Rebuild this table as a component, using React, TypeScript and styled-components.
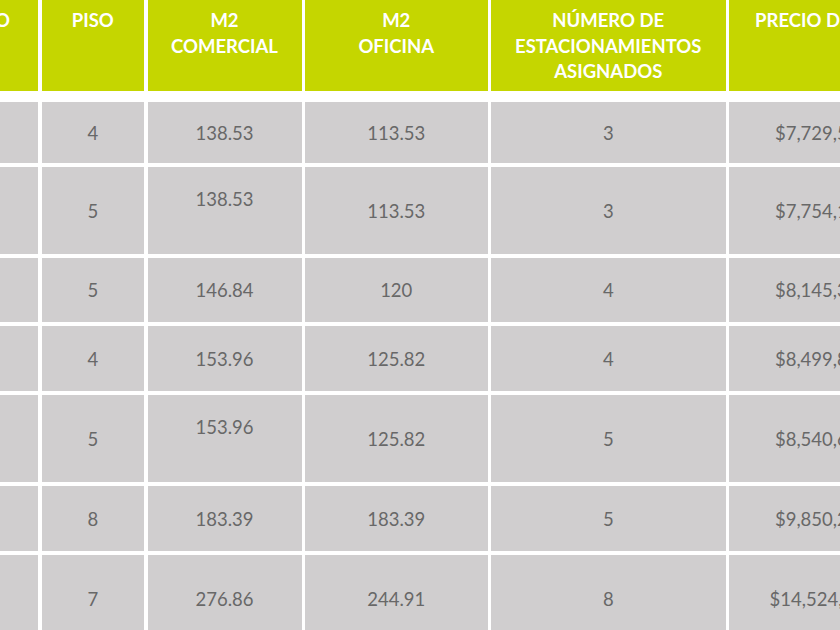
import styled, { createGlobalStyle } from "styled-components";

const GlobalStyle = createGlobalStyle`
  html, body {
    margin: 0;
    padding: 0;
    background: #ffffff;
    overflow: hidden;
  }
  body {
    font-family: "Lato", "Open Sans", sans-serif;
  }
`;

const COLS = "118px 102.5px 154px 182.5px 234.5px 212px";

const rows = [
  { piso: "4", comercial: "138.53", oficina: "113.53", est: "3", precio: "$7,729,560.00", h: 61 },
  { piso: "5", comercial: "138.53", oficina: "113.53", est: "3", precio: "$7,754,190.00", h: 87, top: true },
  { piso: "5", comercial: "146.84", oficina: "120", est: "4", precio: "$8,145,320.00", h: 64 },
  { piso: "4", comercial: "153.96", oficina: "125.82", est: "4", precio: "$8,499,870.00", h: 65 },
  { piso: "5", comercial: "153.96", oficina: "125.82", est: "5", precio: "$8,540,610.00", h: 87, top: true },
  { piso: "8", comercial: "183.39", oficina: "183.39", est: "5", precio: "$9,850,240.00", h: 65 },
  { piso: "7", comercial: "276.86", oficina: "244.91", est: "8", precio: "$14,524,380.00", h: 87 },
];

const PriceTable = () => {
  return (
    <Wrapper>
      <HeaderRow>
        <HeadCell>DEPTO</HeadCell>
        <HeadCell>PISO</HeadCell>
        <HeadCell>
          M2
          <br />
          COMERCIAL
        </HeadCell>
        <HeadCell>
          M2
          <br />
          OFICINA
        </HeadCell>
        <HeadCell>
          NÚMERO DE
          <br />
          ESTACIONAMIENTOS
          <br />
          ASIGNADOS
        </HeadCell>
        <HeadCell>PRECIO DE VENTA</HeadCell>
      </HeaderRow>
      <Body>
        {rows.map((r, i) => (
          <BodyRow key={i} $height={r.h}>
            <Cell />
            <Cell>{r.piso}</Cell>
            <Cell $top={r.top}>{r.comercial}</Cell>
            <Cell>{r.oficina}</Cell>
            <Cell>{r.est}</Cell>
            <Cell>{r.precio}</Cell>
          </BodyRow>
        ))}
      </Body>
    </Wrapper>
  );
};

const Wrapper = styled.div`
  width: 1021px;
  margin-left: -80px;
  display: flex;
  flex-direction: column;
  gap: 11px;
`;

const HeaderRow = styled.div`
  display: grid;
  grid-template-columns: ${COLS};
  column-gap: 3.5px;
  height: 91px;
`;

const HeadCell = styled.div`
  background: #c5d600;
  color: #ffffff;
  font-weight: 700;
  font-size: 18.5px;
  line-height: 25.5px;
  text-align: center;
  padding-top: 8px;
  white-space: nowrap;
  overflow: hidden;
`;

const Body = styled.div`
  display: flex;
  flex-direction: column;
  gap: 4px;
`;

const BodyRow = styled.div<{ $height: number }>`
  display: grid;
  grid-template-columns: ${COLS};
  column-gap: 3.5px;
  height: ${(p) => p.$height}px;
`;

const Cell = styled.div<{ $top?: boolean }>`
  background: #d0cecf;
  color: #686868;
  font-size: 18.5px;
  line-height: 22px;
  display: flex;
  justify-content: center;
  align-items: ${(p) => (p.$top ? "flex-start" : "center")};
  padding-top: ${(p) => (p.$top ? "21px" : "0")};
  white-space: nowrap;
`;

export default function App() {
  return (
    <>
      <GlobalStyle />
      <PriceTable />
    </>
  );
}
